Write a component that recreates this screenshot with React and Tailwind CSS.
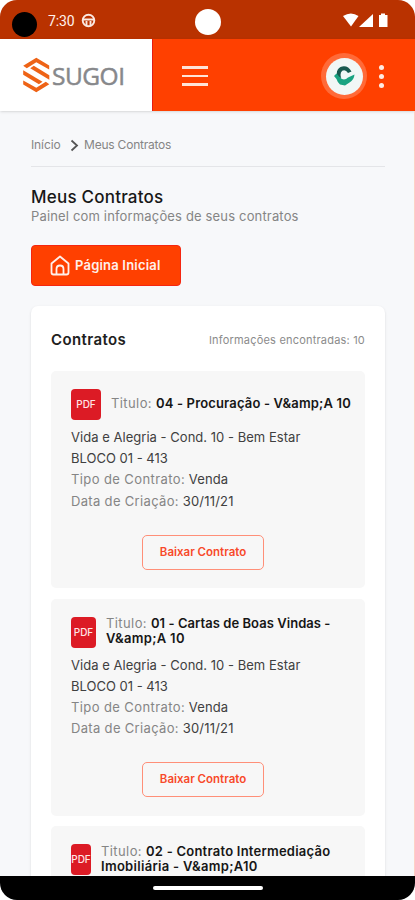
import React from "react";

function SugoiMark() {
  return (
    <svg width="28" height="36" viewBox="0 0 28 36" fill="#ee6316" className="shrink-0">
      <path d="M1.200 8.800 14.300 .8l12.900 7.800v4L14.300 5.300 4.800 11.200z" />
      <path d="M1.200 13.200 20.500 24.800l-3.600 2.500L1.200 17.700z" />
      <path d="M27.300 22.800 8.200 11.300l3.600-2.500 15.500 9.500z" />
      <path d="M27.300 27.200 14.300 35.200 1.200 27.400v-4l13.100 7.300 9.500-5.900z" />
    </svg>
  );
}

function StatusBar() {
  return (
    <div className="flex h-[39px] shrink-0 items-center bg-[#b93200] text-white">
      <div className="mt-[9px] ml-3 size-[25px] rounded-full bg-black" />
      <span className="mt-[3px] ml-[11px] w-[32px] font-['Roboto',sans-serif] text-[14px] leading-4 tracking-[-0.1px] text-[#fff1ec]">7:30</span>
      <svg width="15" height="15" viewBox="0 0 15 15" className="mt-[2px] ml-px" fill="none" stroke="#fbe9e2" strokeWidth="1.900">
        <circle cx="7.500" cy="7.500" r="5.800" />
        <path d="M2 6.500h11M5.500 8v4M9.500 8v4" />
      </svg>
      <div className="mt-[4px] ml-[99px] size-[26px] rounded-full bg-white" />
      <svg width="48" height="15" viewBox="0 0 48 15" fill="white" className="mt-px ml-[121px]">
        <path d="M1 3Q9 -2 16.500 3L9 13.500z" />
        <path d="M31 1v13H17z" />
        <path d="M37 2h2V.5h4V2h2.500v12H37z" />
      </svg>
    </div>
  );
}

function Header() {
  return (
    <header className="flex h-[72px] shrink-0 items-center bg-[#ff4000] shadow-sm">
      <div className="flex h-full w-[153px] items-center border-r border-[#e51c12] bg-white pl-[22px]">
        <SugoiMark />
        <span className="mt-px ml-[2px] font-['Open_Sans',sans-serif] text-[24.5px] leading-8 font-medium tracking-[-0.5px] text-[#87888b] [-webkit-text-stroke:0.5px_#87888b]">SUGOI</span>
      </div>
      <div className="mt-[2px] ml-[29px] flex w-[26px] flex-col gap-[6px]">
        <i className="h-[2.5px] bg-[#ffe3d8]" />
        <i className="h-[2.5px] bg-[#ffe3d8]" />
        <i className="h-[2.5px] bg-[#ffe3d8]" />
      </div>
      <div className="mt-[2px] ml-[113px] flex size-[46px] items-center justify-center rounded-full bg-[#ff6a38]">
        <div className="flex size-[37px] items-center justify-center rounded-full bg-[#f1f7f6]">
          <svg width="22" height="22" viewBox="0 0 22 22">
            <path d="M18.500 6.500 15 8Q12.500 4 9.200 5.800 6.500 8.500 8.200 13L4.200 12Q2.500 5 7.500 2 14.500-.5 18.500 6.500z" fill="#17594f" />
            <path d="M1 11 3.500 8.500 7 12.500Q11 16.500 15 12.500L21.500 9.500Q21 15 16.500 17.500l-4.500 3-5-1Q4.500 17.500 3.500 14z" fill="#19a381" />
          </svg>
        </div>
      </div>
      <div className="mt-[3px] ml-[12px] flex flex-col gap-[4px]">
        <i className="size-[5px] rounded-full bg-[#ffebe3]" />
        <i className="size-[5px] rounded-full bg-[#ffebe3]" />
        <i className="size-[5px] rounded-full bg-[#ffebe3]" />
      </div>
    </header>
  );
}

function Contract({ lines, badge, tracking, preview }) {
  return (
    <article className="h-[217px] shrink-0 rounded-[5px] bg-[#f7f7f7] px-5 pt-[18px] text-[13px] text-[#404040]">
      <div className="flex h-[31px] items-center">
        <div className={`flex h-[31px] shrink-0 items-center justify-center rounded-[4px] bg-[#dc1b25] text-[10px] font-medium text-[#ffe5e5] ${badge}`}>PDF</div>
        <h3 className={`-mt-[2px] ml-[10px] leading-[15px] font-semibold whitespace-nowrap text-[#161616] ${tracking}`}>
          <div className="flex">
            <span className="mr-[4px] font-normal tracking-[0.4px] text-[#858585]">Titulo:</span>
            <span>{lines[0]}</span>
          </div>
          {lines[1] && <div className="tracking-[0.3px]">{lines[1]}</div>}
        </h3>
      </div>
      {!preview && (
        <>
          <div className="mt-[7px] leading-[21.2px]">
            <p className="tracking-[0.03px]">Vida e Alegria - Cond. 10 - Bem Estar</p>
            <p>BLOCO 01 - 413</p>
            <p className="tracking-[0.1px]"><span className="tracking-[0.4px] text-[#858585]">Tipo de Contrato:</span> Venda</p>
            <p className="tracking-[0.2px]"><span className="tracking-[0.33px] text-[#858585]">Data de Criação:</span> 30/11/21</p>
          </div>
          <button className="mt-[23px] ml-[71px] flex h-[35px] w-[122px] items-center justify-center rounded-[5px] border border-[#ff8f78] text-[11.5px] font-semibold text-[#f8492a]">Baixar Contrato</button>
        </>
      )}
    </article>
  );
}

export default function App() {
  return (
    <div className="h-[900px] w-[415px] overflow-hidden bg-white font-['Inter',sans-serif]">
      <div className="flex h-full flex-col overflow-hidden rounded-[17px] bg-[#f7f8fa]">
        <StatusBar />
        <Header />
        <main className="min-h-0 flex-1 overflow-hidden border-r border-[#ffd0c5] pr-[29px] pl-[31px]">
          <nav className="flex h-[56px] items-center border-b border-[#e4e5e8] pt-[13px] text-[12px] text-[#858585]">
            <span className="tracking-[-0.1px]">Início</span>
            <svg width="9" height="13" viewBox="0 0 9 13" className="mt-px mr-[5px] ml-[9.500px]" fill="none" stroke="#555" strokeWidth="1.800"><path d="m1.500 1.500 5.500 5-5.500 5" /></svg>
            <span className="tracking-[-0.22px]">Meus Contratos</span>
          </nav>
          <h1 className="mt-[20px] text-[17px] leading-[21px] font-medium tracking-[0.22px] text-[#171717]">Meus Contratos</h1>
          <p className="text-[13px] leading-[17px] tracking-[0.16px] text-[#858585]">Painel com informações de seus contratos</p>
          <button className="mt-[20px] flex h-[41px] w-[150px] items-center rounded-[4px] border border-[#f52610] bg-[#ff4000] pl-[18px] text-[13px] font-semibold tracking-[0.2px] text-[#fff0eb]">
            <svg width="20" height="21" viewBox="0 0 20 21" fill="none" stroke="#fff0eb" strokeWidth="1.800" strokeLinejoin="round" className="mr-[5px]">
              <path d="M1.500 8.500 10 1.500l8.500 7v9q0 2-2 2h-13q-2 0-2-2z" /><path d="M6.500 19v-5q0-3.500 3.500-3.500t3.500 3.500v5" />
            </svg>
            Página Inicial
          </button>
          <section className="mt-5 rounded-t-[7px] bg-white px-5 shadow-sm">
            <div className="flex h-[65px] items-center justify-between pt-[4px]">
              <h2 className="text-[15px] font-semibold tracking-[0.4px] text-[#202020]">Contratos</h2>
              <span className="text-[11px] tracking-[0.2px] text-[#8b8b8b]">Informações encontradas: 10</span>
            </div>
            <div className="flex flex-col gap-[10.500px]">
              <Contract lines={["04 - Procuração - V&amp;A 10"]} badge="w-[30px]" tracking="tracking-[0.16px]" />
              <Contract lines={["01 - Cartas de Boas Vindas -", "V&amp;A 10"]} badge="w-[25px]" tracking="tracking-[0.05px]" />
              <Contract lines={["02 - Contrato Intermediação", "Imobiliária - V&amp;A10"]} badge="w-[20px]" tracking="tracking-[0.24px]" preview />
            </div>
          </section>
        </main>
        <footer className="flex h-[24px] shrink-0 justify-center bg-black pt-[10px]">
          <div className="h-[4px] w-[110px] rounded-full bg-white" />
        </footer>
      </div>
    </div>
  );
}
